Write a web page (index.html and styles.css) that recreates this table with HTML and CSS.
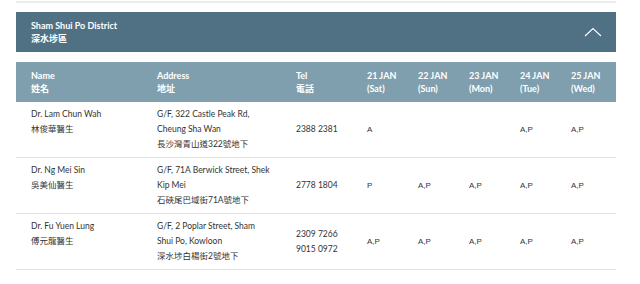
FILE: index.html
```html
<!DOCTYPE html>
<html>
<head>
<meta charset="utf-8">
<link rel="stylesheet" href="styles.css">
</head>
<body>
<div class="wrap">
  <div class="topline"></div>
  <div class="district">
    <div class="district-title">
      <div>Sham Shui Po District</div>
      <div>深水埗區</div>
    </div>
    <svg class="chev" width="18" height="10" viewBox="0 0 18 10"><path d="M1 9 L9 1.5 L17 9" fill="none" stroke="#fff" stroke-width="1.1"/></svg>
  </div>
  <div class="table">
    <div class="row head">
      <div>Name<br>姓名</div>
      <div>Address<br>地址</div>
      <div>Tel<br>電話</div>
      <div>21 JAN<br>(Sat)</div>
      <div>22 JAN<br>(Sun)</div>
      <div>23 JAN<br>(Mon)</div>
      <div>24 JAN<br>(Tue)</div>
      <div>25 JAN<br>(Wed)</div>
    </div>
    <div class="row body">
      <div class="top">Dr. Lam Chun Wah<br>林俊華醫生</div>
      <div class="top">G/F, 322 Castle Peak Rd,<br>Cheung Sha Wan<br>長沙灣青山道322號地下</div>
      <div class="mid">2388 2381</div>
      <div class="mid ap">A</div>
      <div class="mid ap"></div>
      <div class="mid ap"></div>
      <div class="mid ap">A,P</div>
      <div class="mid ap">A,P</div>
    </div>
    <div class="row body">
      <div class="top">Dr. Ng Mei Sin<br>吳美仙醫生</div>
      <div class="top">G/F, 71A Berwick Street, Shek<br>Kip Mei<br>石硤尾巴域街71A號地下</div>
      <div class="mid">2778 1804</div>
      <div class="mid ap">P</div>
      <div class="mid ap">A,P</div>
      <div class="mid ap">A,P</div>
      <div class="mid ap">A,P</div>
      <div class="mid ap">A,P</div>
    </div>
    <div class="row body">
      <div class="top">Dr. Fu Yuen Lung<br>傅元龍醫生</div>
      <div class="top">G/F, 2 Poplar Street, Sham<br>Shui Po, Kowloon<br>深水埗白楊街2號地下</div>
      <div class="mid">2309 7266<br>9015 0972</div>
      <div class="mid ap">A,P</div>
      <div class="mid ap">A,P</div>
      <div class="mid ap">A,P</div>
      <div class="mid ap">A,P</div>
      <div class="mid ap">A,P</div>
    </div>
  </div>
</div>
</body>
</html>
```
FILE: styles.css
```css
html, body {
  margin: 0;
  padding: 0;
  background: #fff;
}
body {
  font-family: Lato, "Noto Sans CJK TC", sans-serif;
  color: #333;
}
.wrap {
  width: 600px;
  margin-left: 16px;
}
.topline {
  height: 2px;
  margin-top: 1px;
  background: #ececec;
}
.district {
  margin-top: 9px;
  height: 40px;
  background: #4f7183;
  color: #fff;
  display: flex;
  align-items: center;
  justify-content: space-between;
  padding: 0 15px;
}
.district-title {
  font-size: 9px;
  font-weight: 700;
  line-height: 13px;
}
.chev {
  display: block;
  margin-right: -1px;
}
.table {
  margin-top: 10px;
}
.row {
  display: grid;
  grid-template-columns: 126px 139px 71px 51px 51px 51px 51px 1fr;
  padding-left: 15px;
}
.head {
  height: 40px;
  align-items: center;
  background: #7f9faf;
  color: #fff;
  font-size: 9px;
  font-weight: 700;
  line-height: 13px;
}
.body {
  font-size: 8.5px;
  line-height: 15px;
  padding-top: 5px;
  padding-bottom: 5px;
  border-bottom: 1px solid #e3e3e3;
}
.top {
  align-self: start;
}
.mid {
  align-self: center;
}
.ap {
  font-family: "Liberation Sans", Arial, sans-serif;
  font-size: 8px;
}
```
